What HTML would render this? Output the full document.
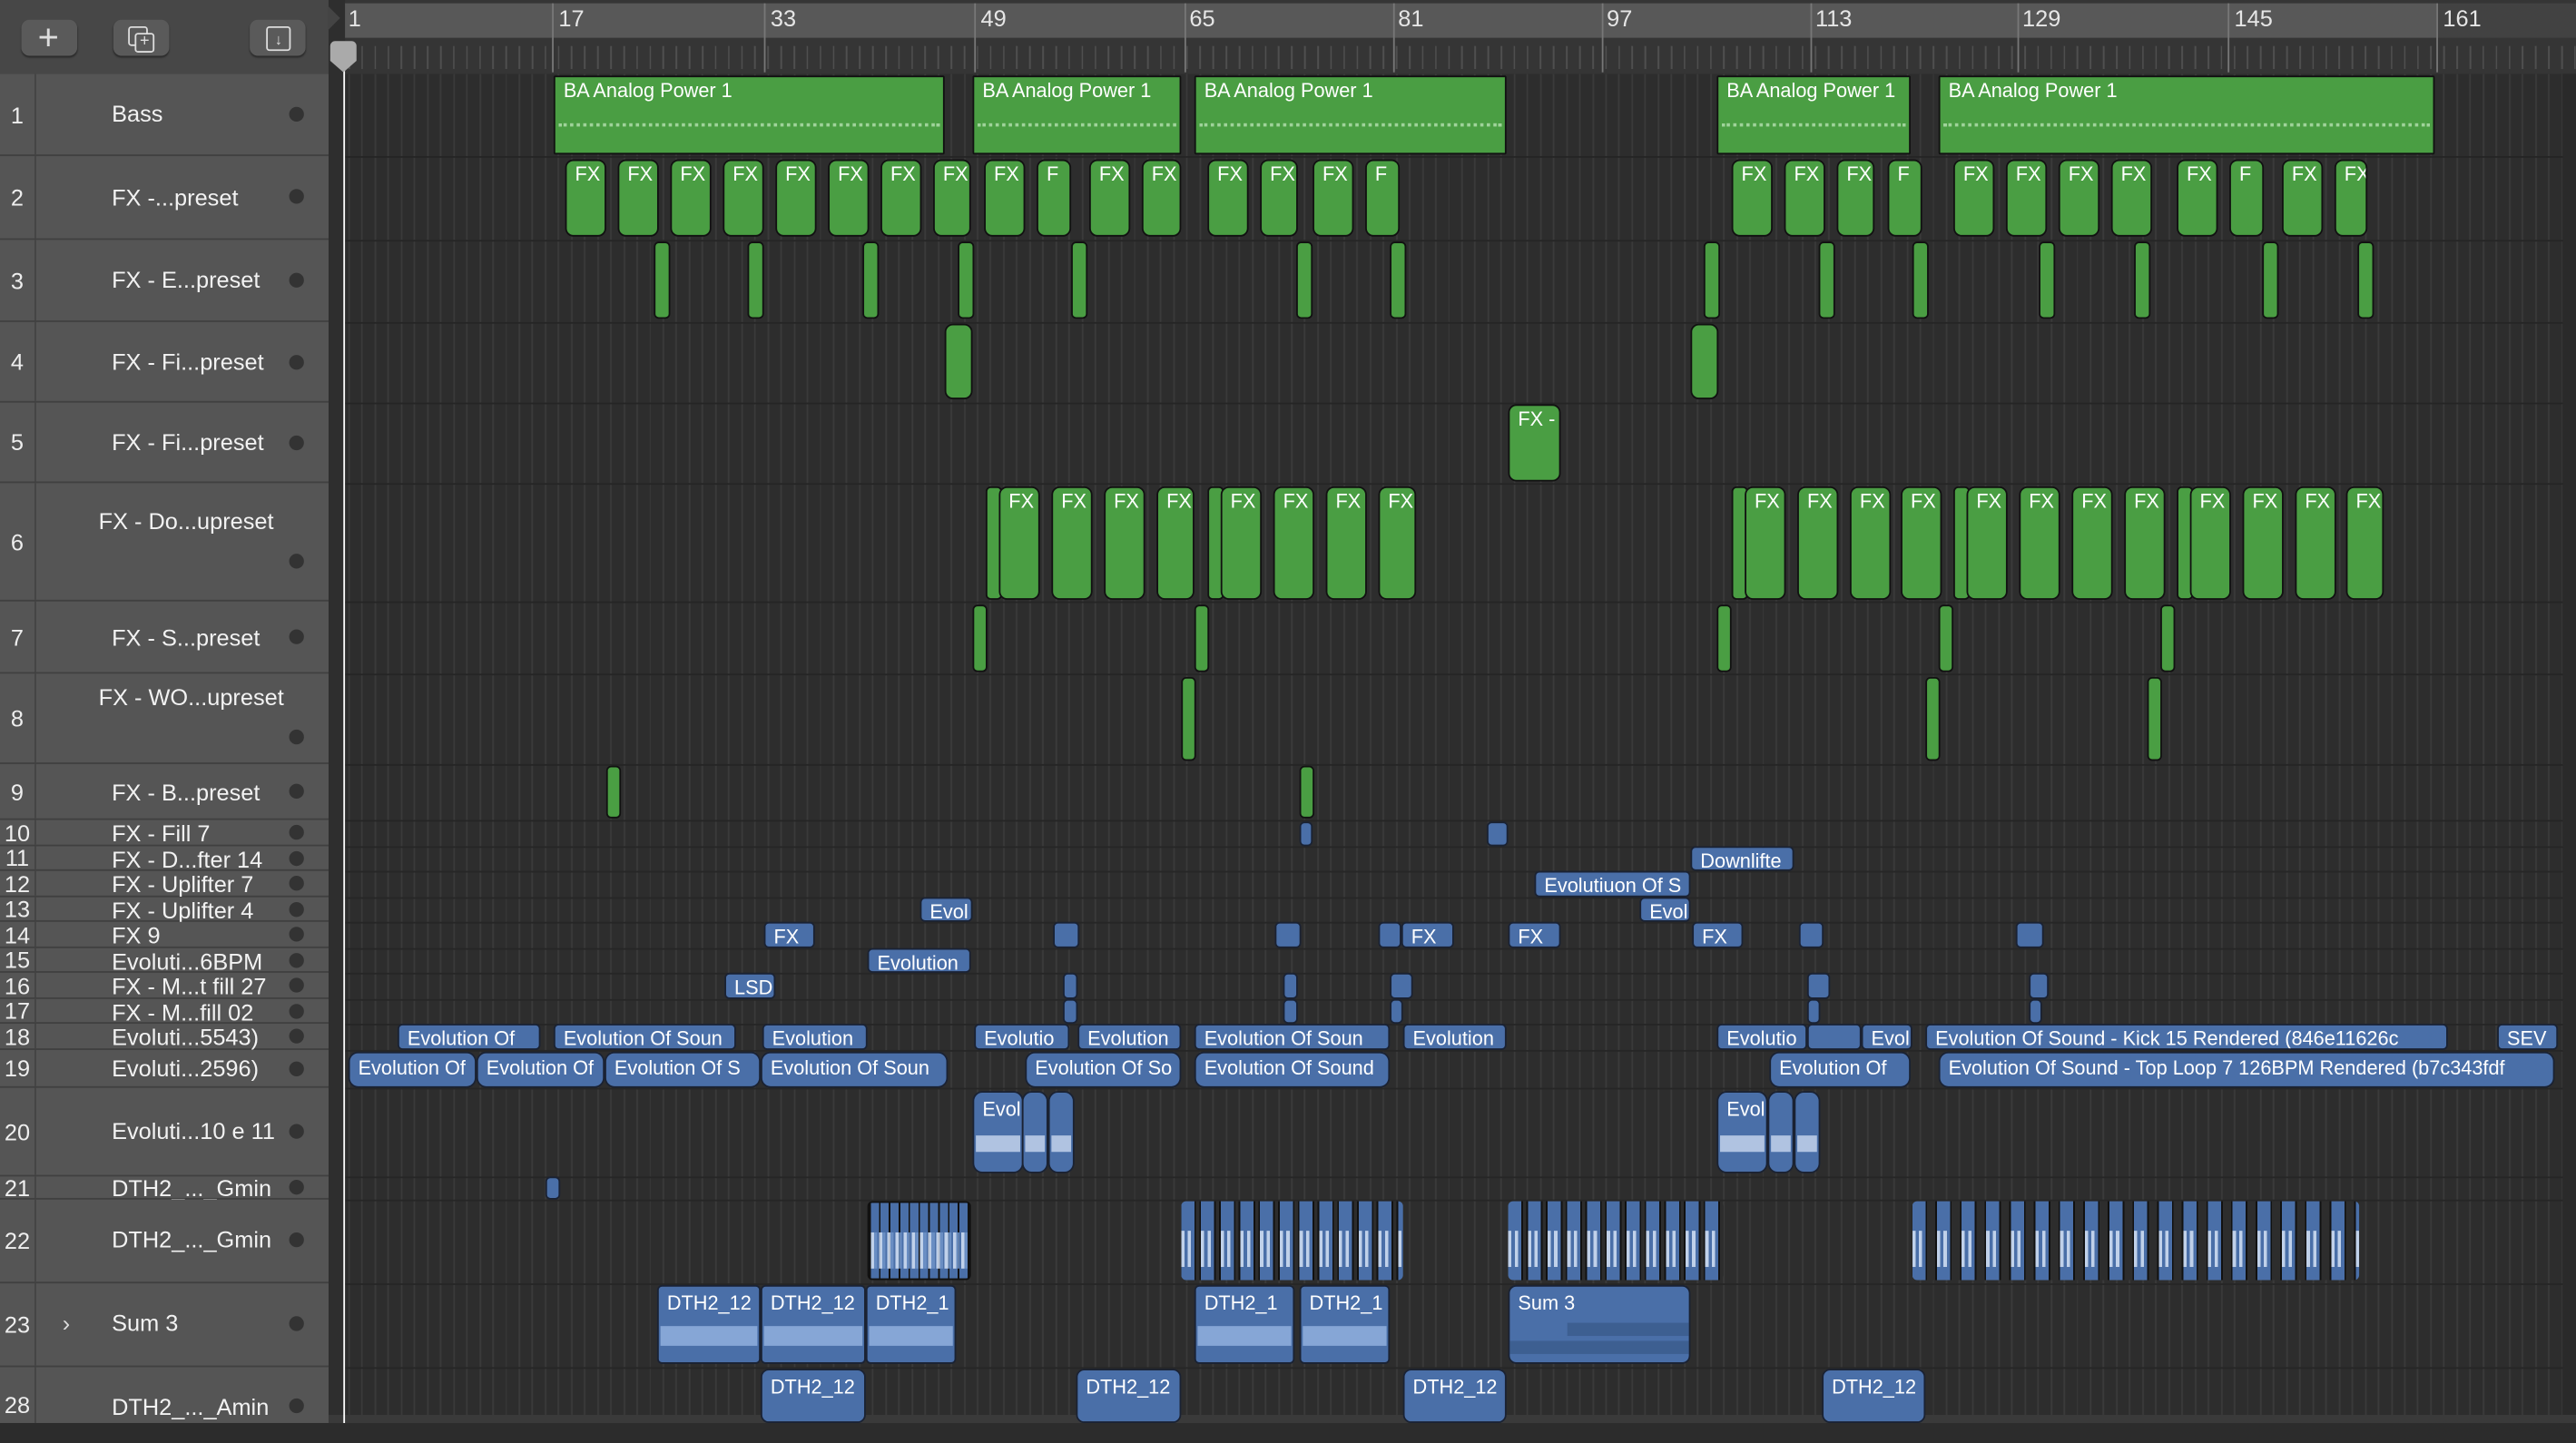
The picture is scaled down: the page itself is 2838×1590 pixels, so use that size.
<!DOCTYPE html>
<html><head><meta charset="utf-8"><style>
html,body{margin:0;padding:0;background:#2c2c2c;overflow:hidden}
body{width:2838px;height:1568px}
#w{position:absolute;left:0;top:0;width:1568px;height:866px;transform:scale(1.80995,1.81062);transform-origin:0 0;font-family:"Liberation Sans",sans-serif;color:#fff}
.a{position:absolute}
.tl{position:absolute;left:0;width:200px;background:#555;border-bottom:1px solid #404040;box-sizing:border-box}
.tl .n{position:absolute;left:0;width:22px;text-align:center;font-size:14px;color:#eee;border-right:1px solid #444;height:100%;box-sizing:border-box}
.tl .t{position:absolute;left:68px;font-size:14px;color:#f2f2f2;white-space:nowrap}
.tl .d{position:absolute;left:176px;width:9px;height:9px;border-radius:50%;background:#333}
.g,.b{position:absolute;box-sizing:border-box;border:1px solid #111;border-radius:3px;font-size:12px;color:#fff;overflow:hidden;white-space:nowrap;padding:1px 0 0 5px;line-height:14px}
.g{background:#4a9e43}
.b{background:#4a6fa8;border-color:#1a2233}
.btn{position:absolute;top:12px;width:34px;height:22px;background:#5a5a5a;border-radius:5px;box-shadow:0 1px 1px #2a2a2a}
.w22{background:repeating-linear-gradient(90deg,#4a6fa8 0 7px,#222 7px 8px,transparent 8px 9px) }
</style></head><body><div id="w">
<!-- header left -->
<div class="a" style="left:0;top:0;width:200px;height:45px;background:#474747;border-bottom:1px solid #3a3a3a"></div>
<div class="btn" style="left:13px"><div class="a" style="left:10px;top:-2px;font-size:22px;color:#ddd">+</div></div>
<div class="btn" style="left:69px"><div class="a" style="left:9px;top:4px;width:10px;height:10px;border:1.5px solid #ddd;border-radius:2px"></div><div class="a" style="left:13px;top:8px;width:10px;height:10px;border:1.5px solid #ddd;border-radius:2px;background:#5a5a5a;font-size:10px;line-height:10px;text-align:center;color:#ddd">+</div></div>
<div class="btn" style="left:152px"><div class="a" style="left:10px;top:4px;width:13px;height:13px;border:1.5px solid #ddd;border-radius:2px;font-size:9px;line-height:14px;text-align:center;color:#ddd">↓</div></div>
<!-- ruler -->
<div class="a" style="left:200px;top:0;width:1368px;height:45px;background:#353535"></div>
<div class="a" style="left:200px;top:2px;width:1283px;height:21px;background:#585858"></div>
<div class="a" style="left:1483px;top:2px;width:85px;height:21px;background:#424242"></div>
<div class="a" style="left:210px;top:23px;width:1358px;height:22px;background:repeating-linear-gradient(90deg,#555 0 1px,transparent 1px 7.97px);background-position:2px 0;opacity:.8;top:28px;height:14px"></div>
<div class="a" style="left:200px;top:0;width:10px;height:866px;background:#2e2e2e"></div>
<div class="a" style="left:210px;top:0;width:1358px;height:866px"></div>
<!-- ruler numbers -->
<div class="a" style="top:3px;left:212px;font-size:14px;color:#e6e6e6">1</div>
<div class="a" style="left:336px;top:2px;width:1px;height:42px;background:#777"></div><div class="a" style="top:3px;left:340px;font-size:14px;color:#e6e6e6">17</div>
<div class="a" style="left:465px;top:2px;width:1px;height:42px;background:#777"></div><div class="a" style="top:3px;left:469px;font-size:14px;color:#e6e6e6">33</div>
<div class="a" style="left:593px;top:2px;width:1px;height:42px;background:#777"></div><div class="a" style="top:3px;left:597px;font-size:14px;color:#e6e6e6">49</div>
<div class="a" style="left:721px;top:2px;width:1px;height:42px;background:#777"></div><div class="a" style="top:3px;left:724px;font-size:14px;color:#e6e6e6">65</div>
<div class="a" style="left:848px;top:2px;width:1px;height:42px;background:#777"></div><div class="a" style="top:3px;left:851px;font-size:14px;color:#e6e6e6">81</div>
<div class="a" style="left:975px;top:2px;width:1px;height:42px;background:#777"></div><div class="a" style="top:3px;left:978px;font-size:14px;color:#e6e6e6">97</div>
<div class="a" style="left:1102px;top:2px;width:1px;height:42px;background:#777"></div><div class="a" style="top:3px;left:1105px;font-size:14px;color:#e6e6e6">113</div>
<div class="a" style="left:1228px;top:2px;width:1px;height:42px;background:#777"></div><div class="a" style="top:3px;left:1231px;font-size:14px;color:#e6e6e6">129</div>
<div class="a" style="left:1356px;top:2px;width:1px;height:42px;background:#777"></div><div class="a" style="top:3px;left:1360px;font-size:14px;color:#e6e6e6">145</div>
<div class="a" style="left:1483px;top:2px;width:1px;height:42px;background:#777"></div><div class="a" style="top:3px;left:1487px;font-size:14px;color:#e6e6e6">161</div>
<!-- track area -->
<div class="a" style="left:210px;top:45px;width:1358px;height:821px;background-color:#2d2d2d;background-image:repeating-linear-gradient(90deg,#3a3a3a 0 1px,transparent 1px 7.97px);background-position:2px 0"></div>
<!-- row lines -->
<div class="a" style="left:210px;top:95px;width:1358px;height:1px;background:#252525"></div>
<div class="a" style="left:210px;top:146px;width:1358px;height:1px;background:#252525"></div>
<div class="a" style="left:210px;top:196px;width:1358px;height:1px;background:#252525"></div>
<div class="a" style="left:210px;top:245px;width:1358px;height:1px;background:#252525"></div>
<div class="a" style="left:210px;top:294px;width:1358px;height:1px;background:#252525"></div>
<div class="a" style="left:210px;top:366px;width:1358px;height:1px;background:#252525"></div>
<div class="a" style="left:210px;top:410px;width:1358px;height:1px;background:#252525"></div>
<div class="a" style="left:210px;top:465px;width:1358px;height:1px;background:#252525"></div>
<div class="a" style="left:210px;top:499px;width:1358px;height:1px;background:#252525"></div>
<div class="a" style="left:210px;top:515px;width:1358px;height:1px;background:#262626"></div>
<div class="a" style="left:210px;top:530px;width:1358px;height:1px;background:#262626"></div>
<div class="a" style="left:210px;top:546px;width:1358px;height:1px;background:#262626"></div>
<div class="a" style="left:210px;top:561px;width:1358px;height:1px;background:#262626"></div>
<div class="a" style="left:210px;top:577px;width:1358px;height:1px;background:#262626"></div>
<div class="a" style="left:210px;top:592px;width:1358px;height:1px;background:#262626"></div>
<div class="a" style="left:210px;top:608px;width:1358px;height:1px;background:#262626"></div>
<div class="a" style="left:210px;top:623px;width:1358px;height:1px;background:#262626"></div>
<div class="a" style="left:210px;top:639px;width:1358px;height:1px;background:#262626"></div>
<div class="a" style="left:210px;top:662px;width:1358px;height:1px;background:#262626"></div>
<div class="a" style="left:210px;top:716px;width:1358px;height:1px;background:#262626"></div>
<div class="a" style="left:210px;top:730px;width:1358px;height:1px;background:#262626"></div>
<div class="a" style="left:210px;top:781px;width:1358px;height:1px;background:#262626"></div>
<div class="a" style="left:210px;top:832px;width:1358px;height:1px;background:#262626"></div>
<div class="a" style="left:1560px;top:45px;width:8px;height:821px;background:#2a2a2a"></div>
<div class="a" style="left:0;top:861px;width:1568px;height:5px;background:#3a3a3a"></div>

<!-- track list -->
<div class="tl" style="top:45px;height:50px"><div class="n" style="line-height:50px">1</div><div class="t" style="top:16px">Bass</div><div class="d" style="top:20px"></div></div>
<div class="tl" style="top:95px;height:51px"><div class="n" style="line-height:51px">2</div><div class="t" style="top:17px">FX -...preset</div><div class="d" style="top:20px"></div></div>
<div class="tl" style="top:146px;height:50px"><div class="n" style="line-height:50px">3</div><div class="t" style="top:16px">FX - E...preset</div><div class="d" style="top:20px"></div></div>
<div class="tl" style="top:196px;height:49px"><div class="n" style="line-height:49px">4</div><div class="t" style="top:16px">FX - Fi...preset</div><div class="d" style="top:20px"></div></div>
<div class="tl" style="top:245px;height:49px"><div class="n" style="line-height:49px">5</div><div class="t" style="top:16px">FX - Fi...preset</div><div class="d" style="top:20px"></div></div>
<div class="tl" style="top:294px;height:72px"><div class="n" style="line-height:72px">6</div><div class="t" style="top:15px;left:60px">FX - Do...upreset</div><div class="d" style="top:43px"></div></div>
<div class="tl" style="top:366px;height:44px"><div class="n" style="line-height:44px">7</div><div class="t" style="top:14px">FX - S...preset</div><div class="d" style="top:17px"></div></div>
<div class="tl" style="top:410px;height:55px"><div class="n" style="line-height:55px">8</div><div class="t" style="top:6px;left:60px">FX - WO...upreset</div><div class="d" style="top:34px"></div></div>
<div class="tl" style="top:465px;height:34px"><div class="n" style="line-height:34px">9</div><div class="t" style="top:9px">FX - B...preset</div><div class="d" style="top:12px"></div></div>
<div class="tl" style="top:499px;height:16px"><div class="n" style="line-height:16px">10</div><div class="t" style="top:0">FX - Fill 7</div><div class="d" style="top:3px"></div></div>
<div class="tl" style="top:515px;height:15px"><div class="n" style="line-height:15px">11</div><div class="t" style="top:0">FX - D...fter 14</div><div class="d" style="top:3px"></div></div>
<div class="tl" style="top:530px;height:16px"><div class="n" style="line-height:16px">12</div><div class="t" style="top:0">FX - Uplifter 7</div><div class="d" style="top:3px"></div></div>
<div class="tl" style="top:546px;height:15px"><div class="n" style="line-height:15px">13</div><div class="t" style="top:0">FX - Uplifter 4</div><div class="d" style="top:3px"></div></div>
<div class="tl" style="top:561px;height:16px"><div class="n" style="line-height:16px">14</div><div class="t" style="top:0">FX 9</div><div class="d" style="top:3px"></div></div>
<div class="tl" style="top:577px;height:15px"><div class="n" style="line-height:15px">15</div><div class="t" style="top:0">Evoluti...6BPM</div><div class="d" style="top:3px"></div></div>
<div class="tl" style="top:592px;height:16px"><div class="n" style="line-height:16px">16</div><div class="t" style="top:0">FX - M...t fill 27</div><div class="d" style="top:3px"></div></div>
<div class="tl" style="top:608px;height:15px"><div class="n" style="line-height:15px">17</div><div class="t" style="top:0">FX - M...fill 02</div><div class="d" style="top:3px"></div></div>
<div class="tl" style="top:623px;height:16px"><div class="n" style="line-height:16px">18</div><div class="t" style="top:0">Evoluti...5543)</div><div class="d" style="top:3px"></div></div>
<div class="tl" style="top:639px;height:23px"><div class="n" style="line-height:23px">19</div><div class="t" style="top:3px">Evoluti...2596)</div><div class="d" style="top:7px"></div></div>
<div class="tl" style="top:662px;height:54px"><div class="n" style="line-height:54px">20</div><div class="t" style="top:18px">Evoluti...10 e 11</div><div class="d" style="top:22px"></div></div>
<div class="tl" style="top:716px;height:14px"><div class="n" style="line-height:14px">21</div><div class="t" style="top:-1px">DTH2_..._Gmin</div><div class="d" style="top:2px"></div></div>
<div class="tl" style="top:730px;height:51px"><div class="n" style="line-height:51px">22</div><div class="t" style="top:16px">DTH2_..._Gmin</div><div class="d" style="top:20px"></div></div>
<div class="tl" style="top:781px;height:51px"><div class="n" style="line-height:51px">23</div><div class="a" style="left:38px;top:16px;font-size:14px;color:#ddd">›</div><div class="t" style="top:16px">Sum 3</div><div class="d" style="top:20px"></div></div>
<div class="tl" style="top:832px;height:34px;border:0"><div class="n" style="line-height:46px">28</div><div class="t" style="top:16px">DTH2_..._Amin</div><div class="d" style="top:19px"></div></div>

<!-- track 1 -->
<div class="g" style="left:337px;top:46px;width:238px;height:48px;border-radius:1px">BA Analog Power 1<div class="a" style="left:2px;top:28px;right:2px;border-top:2px dotted #9fd39a"></div></div>
<div class="g" style="left:592px;top:46px;width:127px;height:48px;border-radius:1px">BA Analog Power 1<div class="a" style="left:2px;top:28px;right:2px;border-top:2px dotted #9fd39a"></div></div>
<div class="g" style="left:727px;top:46px;width:190px;height:48px;border-radius:1px">BA Analog Power 1<div class="a" style="left:2px;top:28px;right:2px;border-top:2px dotted #9fd39a"></div></div>
<div class="g" style="left:1045px;top:46px;width:118px;height:48px;border-radius:1px">BA Analog Power 1<div class="a" style="left:2px;top:28px;right:2px;border-top:2px dotted #9fd39a"></div></div>
<div class="g" style="left:1180px;top:46px;width:302px;height:48px;border-radius:1px">BA Analog Power 1<div class="a" style="left:2px;top:28px;right:2px;border-top:2px dotted #9fd39a"></div></div>
<!-- track 2 -->
<div class="g" style="left:344px;top:97px;width:25px;height:47px;border-radius:5px">FX</div>
<div class="g" style="left:376px;top:97px;width:25px;height:47px;border-radius:5px">FX</div>
<div class="g" style="left:408px;top:97px;width:25px;height:47px;border-radius:5px">FX</div>
<div class="g" style="left:440px;top:97px;width:25px;height:47px;border-radius:5px">FX</div>
<div class="g" style="left:472px;top:97px;width:25px;height:47px;border-radius:5px">FX</div>
<div class="g" style="left:504px;top:97px;width:25px;height:47px;border-radius:5px">FX</div>
<div class="g" style="left:536px;top:97px;width:25px;height:47px;border-radius:5px">FX</div>
<div class="g" style="left:568px;top:97px;width:23px;height:47px;border-radius:5px">FX</div>
<div class="g" style="left:599px;top:97px;width:25px;height:47px;border-radius:5px">FX</div>
<div class="g" style="left:631px;top:97px;width:21px;height:47px;border-radius:5px">F</div>
<div class="g" style="left:663px;top:97px;width:25px;height:47px;border-radius:5px">FX</div>
<div class="g" style="left:695px;top:97px;width:24px;height:47px;border-radius:5px">FX</div>
<div class="g" style="left:735px;top:97px;width:25px;height:47px;border-radius:5px">FX</div>
<div class="g" style="left:767px;top:97px;width:23px;height:47px;border-radius:5px">FX</div>
<div class="g" style="left:799px;top:97px;width:25px;height:47px;border-radius:5px">FX</div>
<div class="g" style="left:831px;top:97px;width:21px;height:47px;border-radius:5px">F</div>
<div class="g" style="left:1054px;top:97px;width:25px;height:47px;border-radius:5px">FX</div>
<div class="g" style="left:1086px;top:97px;width:25px;height:47px;border-radius:5px">FX</div>
<div class="g" style="left:1118px;top:97px;width:23px;height:47px;border-radius:5px">FX</div>
<div class="g" style="left:1149px;top:97px;width:21px;height:47px;border-radius:5px">F</div>
<div class="g" style="left:1189px;top:97px;width:25px;height:47px;border-radius:5px">FX</div>
<div class="g" style="left:1221px;top:97px;width:25px;height:47px;border-radius:5px">FX</div>
<div class="g" style="left:1253px;top:97px;width:25px;height:47px;border-radius:5px">FX</div>
<div class="g" style="left:1285px;top:97px;width:25px;height:47px;border-radius:5px">FX</div>
<div class="g" style="left:1325px;top:97px;width:25px;height:47px;border-radius:5px">FX</div>
<div class="g" style="left:1357px;top:97px;width:21px;height:47px;border-radius:5px">F</div>
<div class="g" style="left:1389px;top:97px;width:25px;height:47px;border-radius:5px">FX</div>
<div class="g" style="left:1421px;top:97px;width:20px;height:47px;border-radius:5px">FX</div>
<!-- track 3 thin -->
<div class="g" style="left:398px;top:147px;width:10px;height:47px"></div>
<div class="g" style="left:455px;top:147px;width:10px;height:47px"></div>
<div class="g" style="left:525px;top:147px;width:10px;height:47px"></div>
<div class="g" style="left:583px;top:147px;width:10px;height:47px"></div>
<div class="g" style="left:652px;top:147px;width:10px;height:47px"></div>
<div class="g" style="left:789px;top:147px;width:10px;height:47px"></div>
<div class="g" style="left:846px;top:147px;width:10px;height:47px"></div>
<div class="g" style="left:1037px;top:147px;width:10px;height:47px"></div>
<div class="g" style="left:1107px;top:147px;width:10px;height:47px"></div>
<div class="g" style="left:1164px;top:147px;width:10px;height:47px"></div>
<div class="g" style="left:1241px;top:147px;width:10px;height:47px"></div>
<div class="g" style="left:1299px;top:147px;width:10px;height:47px"></div>
<div class="g" style="left:1377px;top:147px;width:10px;height:47px"></div>
<div class="g" style="left:1435px;top:147px;width:10px;height:47px"></div>
<!-- track 4,5 -->
<div class="g" style="left:575px;top:197px;width:17px;height:46px;border-radius:5px"></div>
<div class="g" style="left:1029px;top:197px;width:17px;height:46px;border-radius:5px"></div>
<div class="g" style="left:918px;top:246px;width:32px;height:47px;border-radius:5px">FX -</div>
<!-- track 6 -->
<div class="g" style="left:600px;top:296px;width:10px;height:69px"></div>
<div class="g" style="left:608px;top:296px;width:25px;height:69px;border-radius:5px">FX</div>
<div class="g" style="left:640px;top:296px;width:25px;height:69px;border-radius:5px">FX</div>
<div class="g" style="left:672px;top:296px;width:25px;height:69px;border-radius:5px">FX</div>
<div class="g" style="left:704px;top:296px;width:23px;height:69px;border-radius:5px">FX</div>
<div class="g" style="left:735px;top:296px;width:10px;height:69px"></div>
<div class="g" style="left:743px;top:296px;width:25px;height:69px;border-radius:5px">FX</div>
<div class="g" style="left:775px;top:296px;width:25px;height:69px;border-radius:5px">FX</div>
<div class="g" style="left:807px;top:296px;width:25px;height:69px;border-radius:5px">FX</div>
<div class="g" style="left:839px;top:296px;width:23px;height:69px;border-radius:5px">FX</div>
<div class="g" style="left:1054px;top:296px;width:10px;height:69px"></div>
<div class="g" style="left:1062px;top:296px;width:25px;height:69px;border-radius:5px">FX</div>
<div class="g" style="left:1094px;top:296px;width:25px;height:69px;border-radius:5px">FX</div>
<div class="g" style="left:1126px;top:296px;width:25px;height:69px;border-radius:5px">FX</div>
<div class="g" style="left:1157px;top:296px;width:25px;height:69px;border-radius:5px">FX</div>
<div class="g" style="left:1189px;top:296px;width:10px;height:69px"></div>
<div class="g" style="left:1197px;top:296px;width:25px;height:69px;border-radius:5px">FX</div>
<div class="g" style="left:1229px;top:296px;width:25px;height:69px;border-radius:5px">FX</div>
<div class="g" style="left:1261px;top:296px;width:25px;height:69px;border-radius:5px">FX</div>
<div class="g" style="left:1293px;top:296px;width:25px;height:69px;border-radius:5px">FX</div>
<div class="g" style="left:1325px;top:296px;width:10px;height:69px"></div>
<div class="g" style="left:1333px;top:296px;width:25px;height:69px;border-radius:5px">FX</div>
<div class="g" style="left:1365px;top:296px;width:25px;height:69px;border-radius:5px">FX</div>
<div class="g" style="left:1397px;top:296px;width:25px;height:69px;border-radius:5px">FX</div>
<div class="g" style="left:1428px;top:296px;width:23px;height:69px;border-radius:5px">FX</div>
<!-- track 7,8,9 -->
<div class="g" style="left:592px;top:368px;width:9px;height:41px"></div>
<div class="g" style="left:727px;top:368px;width:9px;height:41px"></div>
<div class="g" style="left:1045px;top:368px;width:9px;height:41px"></div>
<div class="g" style="left:1180px;top:368px;width:9px;height:41px"></div>
<div class="g" style="left:1315px;top:368px;width:9px;height:41px"></div>
<div class="g" style="left:719px;top:412px;width:9px;height:51px"></div>
<div class="g" style="left:1172px;top:412px;width:9px;height:51px"></div>
<div class="g" style="left:1307px;top:412px;width:9px;height:51px"></div>
<div class="g" style="left:369px;top:466px;width:9px;height:32px"></div>
<div class="g" style="left:791px;top:466px;width:9px;height:32px"></div>
<!-- small blue tracks -->
<div class="b" style="left:791px;top:500px;width:8px;height:15px"></div>
<div class="b" style="left:905px;top:500px;width:13px;height:15px"></div>
<div class="b" style="left:1029px;top:515px;width:63px;height:15px">Downlifte</div>
<div class="b" style="left:934px;top:530px;width:95px;height:16px">Evolutiuon Of S</div>
<div class="b" style="left:560px;top:546px;width:32px;height:15px">Evol</div>
<div class="b" style="left:998px;top:546px;width:31px;height:15px">Evol</div>
<div class="b" style="left:465px;top:561px;width:31px;height:16px">FX</div>
<div class="b" style="left:641px;top:561px;width:16px;height:16px"></div>
<div class="b" style="left:776px;top:561px;width:16px;height:16px"></div>
<div class="b" style="left:839px;top:561px;width:14px;height:16px"></div>
<div class="b" style="left:853px;top:561px;width:32px;height:16px">FX</div>
<div class="b" style="left:918px;top:561px;width:32px;height:16px">FX</div>
<div class="b" style="left:1030px;top:561px;width:31px;height:16px">FX</div>
<div class="b" style="left:1095px;top:561px;width:15px;height:16px"></div>
<div class="b" style="left:1227px;top:561px;width:17px;height:16px"></div>
<div class="b" style="left:528px;top:577px;width:63px;height:15px">Evolution</div>
<div class="b" style="left:441px;top:592px;width:31px;height:16px">LSD</div>
<div class="b" style="left:647px;top:592px;width:9px;height:16px"></div>
<div class="b" style="left:781px;top:592px;width:9px;height:16px"></div>
<div class="b" style="left:846px;top:592px;width:14px;height:16px"></div>
<div class="b" style="left:1100px;top:592px;width:14px;height:16px"></div>
<div class="b" style="left:1235px;top:592px;width:12px;height:16px"></div>
<div class="b" style="left:647px;top:608px;width:9px;height:15px"></div>
<div class="b" style="left:781px;top:608px;width:9px;height:15px"></div>
<div class="b" style="left:846px;top:608px;width:8px;height:15px"></div>
<div class="b" style="left:1100px;top:608px;width:8px;height:15px"></div>
<div class="b" style="left:1235px;top:608px;width:8px;height:15px"></div>
<!-- track 18 -->
<div class="b" style="left:242px;top:623px;width:87px;height:16px">Evolution Of</div>
<div class="b" style="left:337px;top:623px;width:111px;height:16px">Evolution Of Soun</div>
<div class="b" style="left:464px;top:623px;width:64px;height:16px">Evolution</div>
<div class="b" style="left:593px;top:623px;width:58px;height:16px">Evolutio</div>
<div class="b" style="left:656px;top:623px;width:63px;height:16px">Evolution</div>
<div class="b" style="left:727px;top:623px;width:119px;height:16px">Evolution Of Soun</div>
<div class="b" style="left:854px;top:623px;width:63px;height:16px">Evolution</div>
<div class="b" style="left:1045px;top:623px;width:55px;height:16px">Evolutio</div>
<div class="b" style="left:1100px;top:623px;width:33px;height:16px"></div>
<div class="b" style="left:1133px;top:623px;width:31px;height:16px">Evolutio</div>
<div class="b" style="left:1172px;top:623px;width:318px;height:16px">Evolution Of Sound - Kick 15 Rendered (846e11626c</div>
<div class="b" style="left:1520px;top:623px;width:37px;height:16px">SEV</div>
<!-- track 19 -->
<div class="b" style="left:212px;top:640px;width:78px;height:22px;border-radius:6px;padding-top:2px">Evolution Of</div>
<div class="b" style="left:290px;top:640px;width:78px;height:22px;border-radius:6px;padding-top:2px">Evolution Of</div>
<div class="b" style="left:368px;top:640px;width:95px;height:22px;border-radius:6px;padding-top:2px">Evolution Of S</div>
<div class="b" style="left:463px;top:640px;width:114px;height:22px;border-radius:6px;padding-top:2px">Evolution Of Soun</div>
<div class="b" style="left:624px;top:640px;width:95px;height:22px;border-radius:6px;padding-top:2px">Evolution Of So</div>
<div class="b" style="left:727px;top:640px;width:119px;height:22px;border-radius:6px;padding-top:2px">Evolution Of Sound</div>
<div class="b" style="left:1077px;top:640px;width:86px;height:22px;border-radius:6px;padding-top:2px">Evolution Of</div>
<div class="b" style="left:1180px;top:640px;width:375px;height:22px;border-radius:6px;padding-top:2px">Evolution Of Sound - Top Loop 7 126BPM Rendered (b7c343fdf</div>
<!-- track 20 -->
<div class="b" style="left:592px;top:664px;width:31px;height:50px;border-radius:6px;padding-top:3px">Evol<div class="a" style="left:1px;right:1px;top:26px;height:10px;background:#c9d8ef;opacity:.8"></div></div>
<div class="b" style="left:622px;top:664px;width:16px;height:50px;border-radius:6px"><div class="a" style="left:1px;right:1px;top:26px;height:10px;background:#c9d8ef;opacity:.8"></div></div>
<div class="b" style="left:638px;top:664px;width:16px;height:50px;border-radius:6px"><div class="a" style="left:1px;right:1px;top:26px;height:10px;background:#c9d8ef;opacity:.8"></div></div>
<div class="b" style="left:1045px;top:664px;width:31px;height:50px;border-radius:6px;padding-top:3px">Evol<div class="a" style="left:1px;right:1px;top:26px;height:10px;background:#c9d8ef;opacity:.8"></div></div>
<div class="b" style="left:1076px;top:664px;width:16px;height:50px;border-radius:6px"><div class="a" style="left:1px;right:1px;top:26px;height:10px;background:#c9d8ef;opacity:.8"></div></div>
<div class="b" style="left:1092px;top:664px;width:16px;height:50px;border-radius:6px"><div class="a" style="left:1px;right:1px;top:26px;height:10px;background:#c9d8ef;opacity:.8"></div></div>
<!-- track 21 -->
<div class="b" style="left:332px;top:716px;width:9px;height:14px"></div>
<!-- track 22 -->
<div class="a" style="left:528px;top:731px;width:63px;height:48px;background:repeating-linear-gradient(90deg,#111 0 1px,#4a6fa8 1px 6px);border:1px solid #111;border-radius:3px;box-sizing:border-box"><div class="a" style="left:0;right:0;top:18px;height:22px;background:repeating-linear-gradient(90deg,transparent 0 1px,#d5e2f5 1px 3px,#6f93c8 3px 5px);opacity:.85"></div></div>
<div class="a" style="left:719px;top:731px;width:135px;height:48px;background:repeating-linear-gradient(90deg,#4a6fa8 0 8px,#111 8px 9px,#2d2d2d 9px 11px,#111 11px 12px);border-radius:3px"><div class="a" style="left:0;right:0;top:18px;height:22px;background:repeating-linear-gradient(90deg,#d5e2f5 0 2px,transparent 2px 4px,#d5e2f5 4px 6px,transparent 6px 12px);opacity:.85"></div></div>
<div class="a" style="left:918px;top:731px;width:131px;height:48px;background:repeating-linear-gradient(90deg,#4a6fa8 0 8px,#111 8px 9px,#2d2d2d 9px 11px,#111 11px 12px);border-radius:3px"><div class="a" style="left:0;right:0;top:18px;height:22px;background:repeating-linear-gradient(90deg,#d5e2f5 0 2px,transparent 2px 4px,#d5e2f5 4px 6px,transparent 6px 12px);opacity:.85"></div></div>
<div class="a" style="left:1164px;top:731px;width:272px;height:48px;background:repeating-linear-gradient(90deg,#4a6fa8 0 8px,#111 8px 9px,#2d2d2d 9px 14px,#111 14px 15px);border-radius:3px"><div class="a" style="left:0;right:0;top:18px;height:22px;background:repeating-linear-gradient(90deg,#d5e2f5 0 2px,transparent 2px 4px,#d5e2f5 4px 6px,transparent 6px 15px);opacity:.85"></div></div>
<!-- track 23 -->
<div class="b" style="left:400px;top:782px;width:63px;height:48px;padding-top:3px">DTH2_12<div class="a" style="left:1px;right:1px;top:24px;height:12px;background:#86a6d6"></div></div>
<div class="b" style="left:463px;top:782px;width:64px;height:48px;padding-top:3px">DTH2_12<div class="a" style="left:1px;right:1px;top:24px;height:12px;background:#86a6d6"></div></div>
<div class="b" style="left:527px;top:782px;width:55px;height:48px;padding-top:3px">DTH2_1<div class="a" style="left:1px;right:1px;top:24px;height:12px;background:#86a6d6"></div></div>
<div class="b" style="left:727px;top:782px;width:61px;height:48px;padding-top:3px">DTH2_1<div class="a" style="left:1px;right:1px;top:24px;height:12px;background:#86a6d6"></div></div>
<div class="b" style="left:791px;top:782px;width:55px;height:48px;padding-top:3px">DTH2_1<div class="a" style="left:1px;right:1px;top:24px;height:12px;background:#86a6d6"></div></div>
<div class="b" style="left:918px;top:782px;width:111px;height:48px;border-radius:5px;padding-top:3px">Sum 3<div class="a" style="left:35px;right:0;top:22px;height:8px;background:#3d5f91"></div><div class="a" style="left:0;right:0;top:33px;height:8px;background:#3d5f91"></div></div>
<!-- track 28 -->
<div class="b" style="left:463px;top:833px;width:64px;height:33px;border-radius:5px;padding-top:3px">DTH2_12</div>
<div class="b" style="left:655px;top:833px;width:64px;height:33px;border-radius:5px;padding-top:3px">DTH2_12</div>
<div class="b" style="left:854px;top:833px;width:63px;height:33px;border-radius:5px;padding-top:3px">DTH2_12</div>
<div class="b" style="left:1109px;top:833px;width:63px;height:33px;border-radius:5px;padding-top:3px">DTH2_12</div>

<!-- playhead -->
<div class="a" style="left:209px;top:40px;width:1px;height:826px;background:#fff"></div>
<div class="a" style="left:201px;top:25px;width:16px;height:12px;background:#aaa;border-radius:3px 3px 0 0"></div>
<div class="a" style="left:201px;top:37px;width:0;height:0;border-left:8px solid transparent;border-right:8px solid transparent;border-top:7px solid #aaa"></div>
<div class="a" style="left:200px;top:4px;width:0;height:0;border-top:7px solid transparent;border-bottom:7px solid transparent;border-left:7px solid #444"></div>
</div></body></html>
